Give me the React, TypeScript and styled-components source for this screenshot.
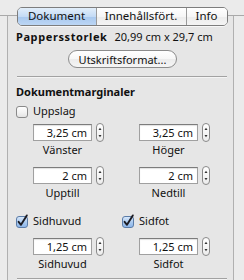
import React from "react";
import styled, { createGlobalStyle } from "styled-components";

const GlobalStyle = createGlobalStyle`
  html, body {
    margin: 0;
    padding: 0;
  }
  body {
    background: #ebebeb;
    font-family: "Noto Sans", "DejaVu Sans", sans-serif;
    font-size: 11px;
    color: #111;
  }
`;

const Screen = styled.div`
  width: 244px;
  height: 280px;
  overflow: hidden;
  background: #ebebeb;
`;

const TabStrip = styled.div`
  height: 15px;
  border-bottom: 1px solid #a9a9a9;
  display: flex;
  justify-content: center;
  align-items: flex-start;
`;

const Segmented = styled.div`
  position: relative;
  z-index: 1;
  margin-top: 7px;
  display: flex;
  height: 17px;
  border: 1px solid #7d7d7d;
  border-radius: 5px;
  overflow: hidden;
  box-shadow: 0 1px 0 rgba(255, 255, 255, 0.7);
  flex-shrink: 0;
`;

const Segment = styled.div<{ $active?: boolean; $width: number }>`
  width: ${(p) => p.$width}px;
  box-sizing: border-box;
  text-align: center;
  line-height: 16px;
  font-size: 11.5px;
  color: #111;
  background: ${(p) =>
    p.$active
      ? "linear-gradient(#e2eefa 0%, #c4dbf5 50%, #a8c8ee 51%, #bcd6f4 100%)"
      : "linear-gradient(#ffffff 0%, #f6f6f6 50%, #ececec 51%, #f4f4f4 100%)"};
  & + & {
    border-left: 1px solid #9a9a9a;
  }
`;

const Box = styled.div`
  margin: 0 10px 0 7px;
  height: 264px;
  box-sizing: border-box;
  border-left: 1px solid #b0b0b0;
  border-right: 1px solid #b0b0b0;
  background: #e6e6e6;
  padding: 14px 4px 0 8px;
`;

const PaperRow = styled.div`
  display: flex;
  line-height: 14px;
  white-space: nowrap;
`;

const Strong = styled.span`
  margin-right: 7px;
  font-weight: 700;
  letter-spacing: 0.6px;
`;

const ButtonRow = styled.div`
  display: flex;
  justify-content: center;
  margin-top: 6px;
`;

const PillButton = styled.button`
  width: 109px;
  height: 18px;
  box-sizing: border-box;
  padding: 0 8px;
  border: 1px solid #8c8c8c;
  border-radius: 9px;
  background: linear-gradient(#ffffff 0%, #f7f7f7 50%, #ececec 51%, #f5f5f5 100%);
  font: inherit;
  color: #111;
  line-height: 15px;
  white-space: nowrap;
`;

const Rule = styled.div<{ $top: number }>`
  height: 1px;
  background: #a2a2a2;
  margin: ${(p) => p.$top}px 2px 0 1px;
  box-shadow: 0 1px 0 rgba(255, 255, 255, 0.55);
`;

const Heading = styled.div`
  margin-top: 8px;
  font-weight: 700;
  line-height: 14px;
`;

const CheckRow = styled.label<{ $top?: number }>`
  display: flex;
  align-items: flex-start;
  gap: 5px;
  margin-top: ${(p) => p.$top ?? 0}px;
  line-height: 14px;
`;

const Check = styled.span<{ $checked?: boolean }>`
  width: 12px;
  height: 12px;
  margin-top: 2px;
  box-sizing: border-box;
  border: 1px solid ${(p) => (p.$checked ? "#5b7ca8" : "#8a8a8a")};
  border-radius: 3px;
  background: ${(p) =>
    p.$checked
      ? "linear-gradient(#d6e7fa 0%, #a9c9ef 55%, #8db6ea 100%)"
      : "linear-gradient(#ffffff 0%, #f1f1f1 60%, #e4e4e4 100%)"};
  flex-shrink: 0;
  display: flex;

  svg {
    display: block;
    overflow: visible;
  }
`;

const Grid = styled.div<{ $top: number }>`
  display: grid;
  grid-template-columns: 106px 106px;
  margin-top: ${(p) => p.$top}px;
`;

const Spin = styled.div`
  display: flex;
  align-items: flex-start;
  gap: 4px;
  padding-left: 17px;
`;

const FieldColumn = styled.div`
  display: flex;
  flex-direction: column;
  align-items: center;
  width: 59px;
`;

const Field = styled.div`
  width: 59px;
  height: 17px;
  box-sizing: border-box;
  background: #fff;
  border: 1px solid #a0a0a0;
  border-top-color: #7c7c7c;
  box-shadow: inset 0 1px 1px rgba(0, 0, 0, 0.12);
  text-align: right;
  padding-right: 4px;
  line-height: 15px;
  white-space: nowrap;
`;

const Caption = styled.div`
  margin-top: 2px;
  line-height: 14px;
  white-space: nowrap;
`;

const Stepper = styled.div`
  width: 8px;
  height: 19px;
  margin-top: -1px;
  box-sizing: border-box;
  border: 1px solid #8a8a8a;
  border-radius: 4px;
  background: linear-gradient(#ffffff, #ececec);
  display: flex;

  svg {
    display: block;
  }
`;

const CheckMark = () => (
  <svg width="10" height="10" viewBox="0 0 10 10">
    <path d="M1.6 4.8 L4 7.8 L9.8 -1.6" fill="none" stroke="#1c1c24" strokeWidth="1.9" strokeLinecap="round" strokeLinejoin="round" />
  </svg>
);

const Arrows = () => (
  <svg width="6" height="17" viewBox="0 0 6 17">
    <path d="M1.5 6 L3 3.8 L4.5 6 Z" fill="#333" />
    <path d="M1.5 11 L3 13.2 L4.5 11 Z" fill="#333" />
  </svg>
);

type Margin = { value: string; caption: string };

const SpinField = ({ value, caption }: Margin) => (
  <Spin>
    <FieldColumn>
      <Field>{value}</Field>
      <Caption>{caption}</Caption>
    </FieldColumn>
    <Stepper>
      <Arrows />
    </Stepper>
  </Spin>
);

const CheckBox = ({ checked, label, top }: { checked?: boolean; label: string; top?: number }) => (
  <CheckRow $top={top}>
    <Check $checked={checked}>{checked && <CheckMark />}</Check>
    <span>{label}</span>
  </CheckRow>
);

const tabs = [
  { label: "Dokument", width: 78, active: true },
  { label: "Innehållsfört.", width: 90 },
  { label: "Info", width: 41 },
];

const App = () => {
  return (
    <Screen>
      <GlobalStyle />
      <TabStrip>
        <Segmented>
          {tabs.map((t) => (
            <Segment key={t.label} $active={t.active} $width={t.width}>
              {t.label}
            </Segment>
          ))}
        </Segmented>
      </TabStrip>
      <Box>
        <PaperRow>
          <Strong>Pappersstorlek</Strong>
          <span>20,99 cm x 29,7 cm</span>
        </PaperRow>
        <ButtonRow>
          <PillButton>Utskriftsformat...</PillButton>
        </ButtonRow>
        <Rule $top={8} />
        <Heading>Dokumentmarginaler</Heading>
        <CheckBox label="Uppslag" top={5} />
        <Grid $top={6}>
          <SpinField value="3,25 cm" caption="Vänster" />
          <SpinField value="3,25 cm" caption="Höger" />
        </Grid>
        <Grid $top={10}>
          <SpinField value="2 cm" caption="Upptill" />
          <SpinField value="2 cm" caption="Nedtill" />
        </Grid>
        <Grid $top={14}>
          <CheckBox checked label="Sidhuvud" />
          <CheckBox checked label="Sidfot" />
        </Grid>
        <Grid $top={10}>
          <SpinField value="1,25 cm" caption="Sidhuvud" />
          <SpinField value="1,25 cm" caption="Sidfot" />
        </Grid>
        <Rule $top={7} />
      </Box>
    </Screen>
  );
};

export default App;
